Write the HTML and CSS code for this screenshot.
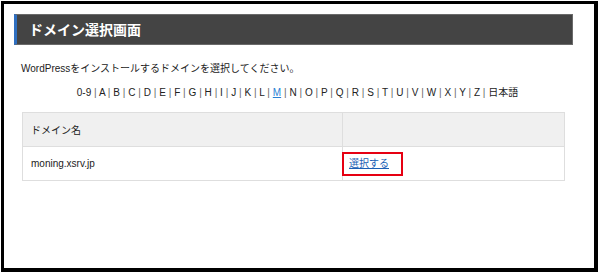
FILE: index.html
```html
<!DOCTYPE html>
<html lang="ja">
<head>
<meta charset="utf-8">
<title>ドメイン選択画面</title>
<link rel="stylesheet" href="styles.css">
</head>
<body>
<div class="frame">
  <h1 class="title">ドメイン選択画面</h1>
  <div class="content">
    <p class="lead">WordPressをインストールするドメインを選択してください。</p>
    <p class="index">
      <span>0-9</span> | <span>A</span> | <span>B</span> | <span>C</span> | <span>D</span> | <span>E</span> | <span>F</span> | <span>G</span> | <span>H</span> | <span>I</span> | <span>J</span> | <span>K</span> | <span>L</span> | <a class="current" href="#">M</a> | <span>N</span> | <span>O</span> | <span>P</span> | <span>Q</span> | <span>R</span> | <span>S</span> | <span>T</span> | <span>U</span> | <span>V</span> | <span>W</span> | <span>X</span> | <span>Y</span> | <span>Z</span> | <span>日本語</span>
    </p>
    <table class="domains">
      <thead>
        <tr><th class="col-name">ドメイン名</th><th class="col-act"></th></tr>
      </thead>
      <tbody>
        <tr><td class="col-name">moning.xsrv.jp</td><td class="col-act"><a class="select" href="#">選択する</a></td></tr>
      </tbody>
    </table>
  </div>
</div>
</body>
</html>
```
FILE: styles.css
```css
html, body {
  margin: 0;
  padding: 0;
  background: #fff;
}
body {
  font-family: "Liberation Sans", Arial, "Noto Sans CJK JP", sans-serif;
  color: #333;
}
.frame {
  box-sizing: border-box;
  margin: 1px 2px 0 1px;
  width: 597px;
  height: 271px;
  border-style: solid;
  border-color: #000;
  border-width: 3px 4px 4px 3px;
  padding: 10px 21px 0 10px;
}
.title {
  margin: 0;
  box-sizing: border-box;
  height: 31px;
  background: #444;
  border: 1px solid #6a6a6a;
  border-left: 3px solid #2f6fc0;
  color: #fff;
  font-size: 14px;
  font-weight: bold;
  line-height: 29px;
  padding-left: 12px;
  font-family: "Noto Sans CJK JP", sans-serif;
}
.content {
  padding: 0 0 0 8px;
}
.lead {
  margin: 16px 0 0 -1px;
  font-size: 10px;
  line-height: 16px;
  color: #222;
  font-family: "Liberation Sans", "Noto Sans CJK JP", sans-serif;
}
.index {
  margin: 8px 0 0;
  font-size: 10px;
  line-height: 16px;
  text-align: center;
  color: #666;
  word-spacing: 0.05px;
}
.index span {
  color: #222;
}
.index .current {
  color: #2a7fd4;
  text-decoration: underline;
}
.domains {
  margin-top: 11px;
  width: 543px;
  border-collapse: collapse;
  font-size: 10px;
  color: #222;
}
.domains th,
.domains td {
  border: 1px solid #dedede;
  height: 33px;
  padding: 0 8px;
  text-align: left;
  font-weight: normal;
  vertical-align: middle;
}
.domains th {
  background: #f0f0f0;
}
.domains .col-name {
  width: 303px;
}
.select {
  display: inline-block;
  color: #1a5fb4;
  text-decoration: underline;
  border: 2px solid #e60012;
  padding: 4px 12px 4px 5px;
  margin-left: -9px;
  line-height: 12px;
}
```
